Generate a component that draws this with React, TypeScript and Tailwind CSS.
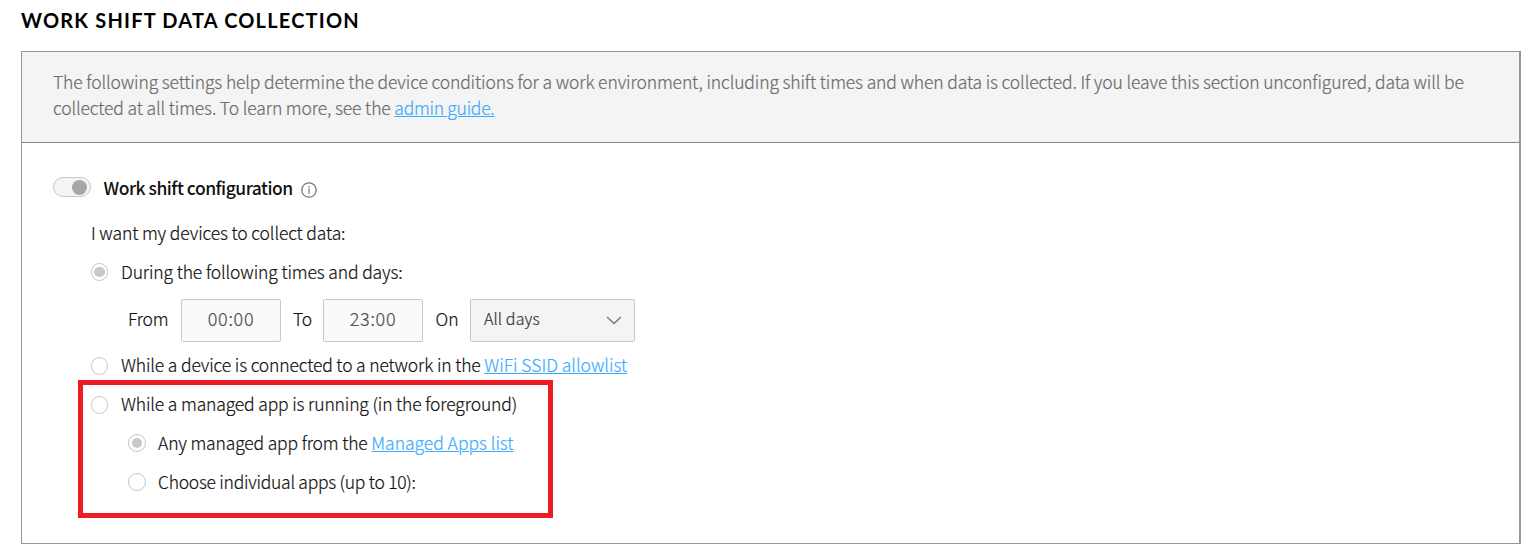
import type { ReactNode } from "react";

function Radio({ checked = false, small = false }: { checked?: boolean; small?: boolean }) {
  return (
    <span
      className={`flex shrink-0 items-center justify-center rounded-full border border-[#c6c6c6] bg-white ${
        small ? "h-[18px] w-[17px]" : "h-[18px] w-[18px]"
      }`}
    >
      {checked && <span className={`h-[10px] rounded-full bg-[#c8c8c8] ${small ? "w-[11px]" : "w-[10px]"}`} />}
    </span>
  );
}

function Link({ children, tracking = "tracking-[-0.02px]" }: { children: ReactNode; tracking?: string }) {
  return (
    <a href="#" className={`text-[#3dabff] underline decoration-1 underline-offset-1 ${tracking}`}>
      {children}
    </a>
  );
}

function TimeField({ value }: { value: string }) {
  return (
    <span className="flex h-[43px] w-[100px] items-center justify-center rounded-[2px] border border-[#c8c8c8] bg-[#fafafa] pb-[4px] text-[18px] tracking-[0.7px] text-[#4d4d4d]">
      {value}
    </span>
  );
}

export default function App() {
  return (
    <main className="h-[552px] w-[1532px] overflow-hidden bg-white pl-[21px] font-['Noto_Sans_CJK_SC',sans-serif] text-[17.5px] font-light text-[#111] [-webkit-text-stroke:0.2px]">
      <h1 className="h-[51px] pt-[6px] font-['Lato',sans-serif] text-[20px] leading-[28px] font-bold tracking-[1.19px] whitespace-nowrap text-black [-webkit-text-stroke:0px]">
        WORK SHIFT DATA COLLECTION
      </h1>

      <section className="relative h-[493px] w-[1500px] border border-r-2 border-[#969696]">
        <p className="h-[91px] border-b border-[#858585] bg-[#f4f4f4] pt-[17px] pl-[31px] leading-[26px] whitespace-nowrap text-[#6b6b6b]">
          <span className="tracking-[-0.127px]">
            The following settings help determine the device conditions for a work environment, including shift times and when data is collected. If you leave this section unconfigured, data will be
          </span>
          <br />
          <span className="tracking-[-0.13px]">
            collected at all times. To learn more, see the <Link tracking="tracking-[-0.28px]">admin guide.</Link>
          </span>
        </p>

        <div className="pt-[25px] leading-[39px] whitespace-nowrap">
          <div className="flex h-[45px] items-start pl-[31px]">
            <span className="mt-[9px] flex h-5 w-[38px] items-center justify-end rounded-full border border-[#c8c8c8] bg-[#f4f4f4] pr-[3px]">
              <span className="h-[15px] w-[15px] rounded-full bg-[#a6a6a6]" />
            </span>
            <span className="ml-[12.5px] w-[197.5px] font-medium tracking-[-0.5px] [-webkit-text-stroke:0px]">Work shift configuration</span>
            <svg className="mt-[14px]" width="16" height="16" viewBox="0 0 16 16" fill="none" stroke="#777">
              <circle cx="8" cy="8" r="7.2" strokeWidth="1.3" />
              <path d="M8 6.5v5.3M8 4v1.4" strokeWidth="1.2" />
            </svg>
          </div>

          <div className="h-[39px] pl-[69px] tracking-[-0.13px]">I want my devices to collect data:</div>

          <div className="flex h-[39px] items-center gap-[13px] pl-[69px]">
            <Radio checked small />
            <span className="tracking-[-0.13px]">During the following times and days:</span>
          </div>

          <div className="flex h-[54px] items-start pt-2 pl-[106px] leading-[39px]">
            <span className="w-[53px] tracking-[-0.2px]">From</span>
            <TimeField value="00:00" />
            <span className="w-[42px] pl-3 tracking-[-0.3px]">To</span>
            <TimeField value="23:00" />
            <span className="w-[47px] pl-[12.5px]">On</span>
            <span className="flex h-[43px] w-[165px] items-center justify-between rounded-[2px] border border-[#c8c8c8] bg-[#f4f4f4] pr-3 pl-[13px] text-[16px] text-[#333]">
              <span className="pb-[4px] tracking-[0.1px]">All days</span>
              <svg width="16" height="9" viewBox="0 0 16 9" fill="none" stroke="#777" strokeWidth="1.4">
                <path d="M1 1l7 6.5L15 1" />
              </svg>
            </span>
          </div>

          <div className="flex h-[39px] items-center gap-[13px] pl-[69px]">
            <span className="pt-[2px]"><Radio small /></span>
            <span className="tracking-[-0.15px]">
              While a device is connected to a network in the <Link>WiFi SSID allowlist</Link>
            </span>
          </div>
          <div className="flex h-[39px] items-center gap-[13px] pl-[69px]">
            <span className="pt-[2px]"><Radio small /></span>
            <span className="tracking-[-0.15px]">While a managed app is running (in the foreground)</span>
          </div>
          <div className="flex h-[39px] items-center gap-3 pl-[106px]">
            <Radio checked />
            <span className="tracking-[-0.16px]">
              Any managed app from the <Link>Managed Apps list</Link>
            </span>
          </div>
          <div className="flex h-[39px] items-center gap-3 pl-[106px]">
            <Radio />
            <span className="tracking-[-0.27px]">Choose individual apps (up to 10):</span>
          </div>
        </div>

        <div className="pointer-events-none absolute top-[328px] left-[56px] h-[138px] w-[475px] border-[5px] border-[#ed1c24]" />
      </section>
    </main>
  );
}
